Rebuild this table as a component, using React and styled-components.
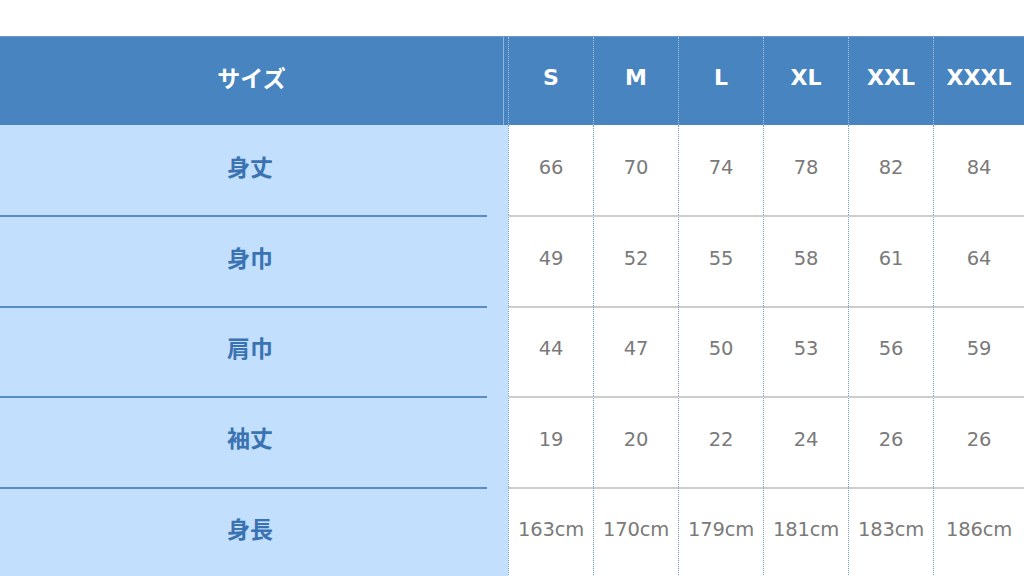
import React from "react";
import styled, { createGlobalStyle } from "styled-components";

const sizes = ["S", "M", "L", "XL", "XXL", "XXXL"];

const rows = [
  { label: "身丈", values: ["66", "70", "74", "78", "82", "84"] },
  { label: "身巾", values: ["49", "52", "55", "58", "61", "64"] },
  { label: "肩巾", values: ["44", "47", "50", "53", "56", "59"] },
  { label: "袖丈", values: ["19", "20", "22", "24", "26", "26"] },
  { label: "身長", values: ["163cm", "170cm", "179cm", "181cm", "183cm", "186cm"] },
];

const GlobalStyle = createGlobalStyle`
  html, body {
    margin: 0;
    padding: 0;
    background: #ffffff;
  }
  body {
    font-family: "DejaVu Sans", "Noto Sans CJK JP", sans-serif;
    overflow: hidden;
  }
`;

const Page = styled.div`
  width: 1024px;
  height: 576px;
  padding-top: 36px;
  box-sizing: border-box;
  overflow: hidden;
`;

const SizeTable = styled.div`
  display: grid;
  grid-template-columns: 508px repeat(5, 85px) 1fr;
  grid-template-rows: 88px repeat(5, 90.4px);
  border-top: 1px solid #6b9ad0;
`;

const HeadCell = styled.div`
  display: flex;
  align-items: center;
  justify-content: center;
  background: #4884c0;
  color: #ffffff;
  font-weight: bold;
  font-size: 22px;
  border-left: ${(p) => (p.$label ? "none" : "1px dotted #a9c6e6")};
  box-sizing: border-box;
  padding-bottom: 7px;
  ${(p) => p.$label && `
    font-family: "Noto Sans CJK JP", sans-serif;
    font-size: 23px;
    padding-right: 5px;
    padding-bottom: 8px;
    box-shadow: inset -4px 0 0 #4884c0, inset -5px 0 0 #8fb3dc;
  `}
`;

const LabelCell = styled.div`
  display: flex;
  align-items: center;
  justify-content: center;
  padding-right: 8px;
  padding-bottom: 8px;
  background-color: #c2e0fd;
  background-image: ${(p) =>
    p.$first ? "none" : "linear-gradient(#5a8dc8, #5a8dc8)"};
  background-repeat: no-repeat;
  background-position: 0 0;
  background-size: 487px 2px;
  color: #3b72b1;
  font-family: "Noto Sans CJK JP", sans-serif;
  font-weight: bold;
  font-size: 23px;
`;

const ValueCell = styled.div`
  display: flex;
  align-items: center;
  justify-content: center;
  box-sizing: border-box;
  background: #ffffff;
  border-left: 1px dotted #6f9bd0;
  border-top: ${(p) => (p.$first ? "none" : "2px solid #cdcdcd")};
  color: #7a7a7a;
  font-size: 19.5px;
  padding-bottom: 6px;
  letter-spacing: -0.2px;
`;

export default function App() {
  return (
    <Page>
      <GlobalStyle />
      <SizeTable>
        <HeadCell $label>サイズ</HeadCell>
        {sizes.map((s) => (
          <HeadCell key={s}>{s}</HeadCell>
        ))}
        {rows.map((row, i) => (
          <React.Fragment key={row.label}>
            <LabelCell $first={i === 0}>{row.label}</LabelCell>
            {row.values.map((v, j) => (
              <ValueCell key={j} $first={i === 0}>
                {v}
              </ValueCell>
            ))}
          </React.Fragment>
        ))}
      </SizeTable>
    </Page>
  );
}
